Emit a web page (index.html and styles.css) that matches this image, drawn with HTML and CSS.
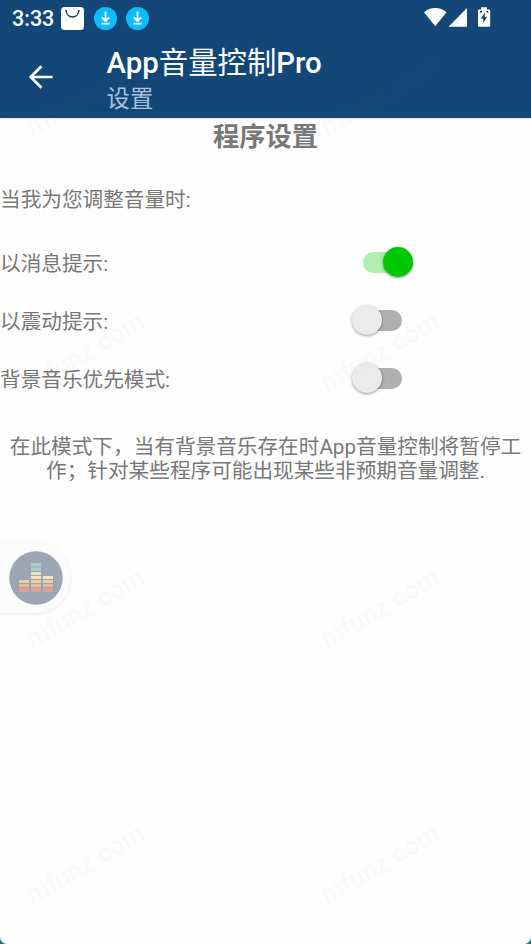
FILE: index.html
```
<!DOCTYPE html>
<html lang="zh-CN">
<head>
<meta charset="utf-8">
<title>App音量控制Pro</title>
<link rel="stylesheet" href="styles.css">
</head>
<body>
<div class="screen">
  <header class="header">
    <div class="status">
      <span class="clock">3:33</span>
      <svg class="bag" width="23" height="23" viewBox="0 0 23 23"><rect width="23" height="23" rx="3.5" fill="#fff"/><path d="M5 3C5.500 12.200 17.500 12.200 18 3" fill="none" stroke="#123f6c" stroke-width="1.500"/></svg>
      <svg class="download" width="23" height="23" viewBox="0 0 23 23"><circle cx="11.500" cy="11.500" r="11.500" fill="#0bbcff"/><path d="M11.500 4.500v9M7.800 10.300l3.700 3.700 3.700-3.700M7.500 16.700h8" fill="none" stroke="#fff" stroke-width="1.800"/></svg>
      <svg class="download" width="23" height="23" viewBox="0 0 23 23"><circle cx="11.500" cy="11.500" r="11.500" fill="#0bbcff"/><path d="M11.500 4.500v9M7.800 10.300l3.700 3.700 3.700-3.700M7.500 16.700h8" fill="none" stroke="#fff" stroke-width="1.800"/></svg>
      <svg class="system" width="68" height="22" viewBox="0 0 68 22"><path d="M0 5.300C6-.5 16.500-.5 22.500 5.300L11.300 19.300ZM43 1v18.700H24.500ZM57 .2h6v2.300h2.200q1 0 1 1v15.200q0 1-1 1H55q-1 0-1-1V3.500q0-1 1-1h2Z" fill="#fff"/><path d="M60.800 5.500v4.400H63L59.300 16v-4.300H57ZM56 4h2v1.500h-2ZM62.300 4h2v1.500h-2Z" fill="#123f6c"/></svg>
    </div>
    <div class="toolbar">
      <svg class="back" width="24" height="24" viewBox="0 0 24 24"><path d="M23.500 12H1.500M12.500 1.200L1.700 12l10.800 10.800" fill="none" stroke="#fff" stroke-width="2.700"/></svg>
      <div class="titles">
        <h1 class="title">App<span class="han">音量控制</span>Pro</h1>
        <div class="subtitle">设置</div>
      </div>
    </div>
  </header>
  <main class="content">
    <h2 class="heading">程序设置</h2>
    <p class="intro">当我为您调整音量时:</p>
    <div class="row"><span>以消息提示:</span><span class="switch on"></span></div>
    <div class="row"><span>以震动提示:</span><span class="switch"></span></div>
    <div class="row"><span>背景音乐优先模式:</span><span class="switch"></span></div>
    <p class="note">在此模式下，当有背景音乐存在时App音量控制将暂停工<br>作；针对某些程序可能出现某些非预期音量调整.</p>
  </main>
  <div class="bubble">
    <svg width="54" height="54" viewBox="0 0 54 54"><circle cx="27" cy="27" r="26.700" fill="#9ca5b3"/>
      <g fill="#dfa09a"><path d="M10 37h10v4H10zM22 37h10v4H22zM34 37h10v4H34z"/></g>
      <g fill="#e4bd94"><path d="M10 33h10v3H10zM22 33h10v3H22zM34 33h10v3H34z"/></g>
      <g fill="#edcfa4"><path d="M10 29h10v3H10zM22 29h10v3H22zM34 29h10v3H34z"/></g>
      <g fill="#f4e4bd"><path d="M22 25h10v3H22zM34 25h10v3H34zM22 21h10v3H22z"/></g>
      <g fill="#a3d1ca"><path d="M22 12h10v3.500H22zM22 16.500h10V20H22z"/></g>
    </svg>
  </div>
  <div class="marks">
    <span>mfunz.com</span><span>mfunz.com</span>
    <span>mfunz.com</span><span>mfunz.com</span>
    <span>mfunz.com</span><span>mfunz.com</span>
    <span>mfunz.com</span><span>mfunz.com</span>
  </div>
</div>
</body>
</html>
```
FILE: styles.css
```
* { box-sizing: border-box; }
body { margin: 0; background: #217083; }
.screen {
  position: relative;
  height: 944px;
  overflow: hidden;
  background: #fefefe;
  border-radius: 0 0 7px 7px;
  font-family: Roboto, "Noto Sans CJK SC", sans-serif;
  color: #787878;
}
.header { height: 118px; background: #134778; color: #fff; box-shadow: 0 1px 2px #e8dfdd; }
.status { display: flex; height: 36px; padding: 7px 39px 0 12px; }
.clock { width: 49px; font-size: 21.500px; font-weight: 500; line-height: 23px; }
.download { margin-left: 9.500px; }
.system { margin-left: auto; }
.toolbar { display: flex; height: 82px; padding-left: 29px; }
.back { margin-top: 29px; }
.titles { margin-left: 53.500px; }
.title { margin: 10px 0 0; font-size: 29.400px; font-weight: 500; line-height: 34px; white-space: nowrap; }
.han { font-weight: 400; }
.subtitle { margin-top: 5px; font-size: 23.400px; line-height: 28px; color: #a9c1db; }
.heading { margin: 0; height: 38px; text-align: center; font-size: 26.300px; font-weight: 700; line-height: 38px; }
.intro { margin: 29px 0 17px; font-size: 20.650px; line-height: 31px; }
.row { display: grid; grid-template-columns: 352px 61px; align-items: center; height: 58px; font-size: 20.650px; }
.switch { position: relative; width: 50px; height: 21px; border-radius: 11px; background: linear-gradient(90deg, transparent 20%, #b0b0b0 20%); }
.switch::after { content: ""; position: absolute; left: 0; top: -5px; width: 30px; height: 30px; border-radius: 50%; background: #ebebeb; box-shadow: 0 1px 3px #0006; }
.switch.on { margin-left: 11px; background: #aff0b0; }
.switch.on::after { left: 20px; background: #00c800; }
.note { margin: 28px 0 0; text-align: center; font-size: 20.650px; line-height: 24px; white-space: nowrap; }
.bubble { position: absolute; left: -10px; top: 543px; width: 80px; height: 70px; padding: 8px 0 0 18.500px; border-radius: 0 35px 35px 0; background: #fcfcfc; box-shadow: 0 1px 5px #00000014; }
.bubble svg { display: block; }
.marks { position: absolute; left: -62px; top: -32px; display: grid; grid-template-columns: 295px 295px; grid-auto-rows: 256px; place-items: center; font: 500 26px Roboto, sans-serif; color: rgba(120, 120, 120, 0.035); pointer-events: none; }
.marks span { transform: rotate(-30deg); }
```
